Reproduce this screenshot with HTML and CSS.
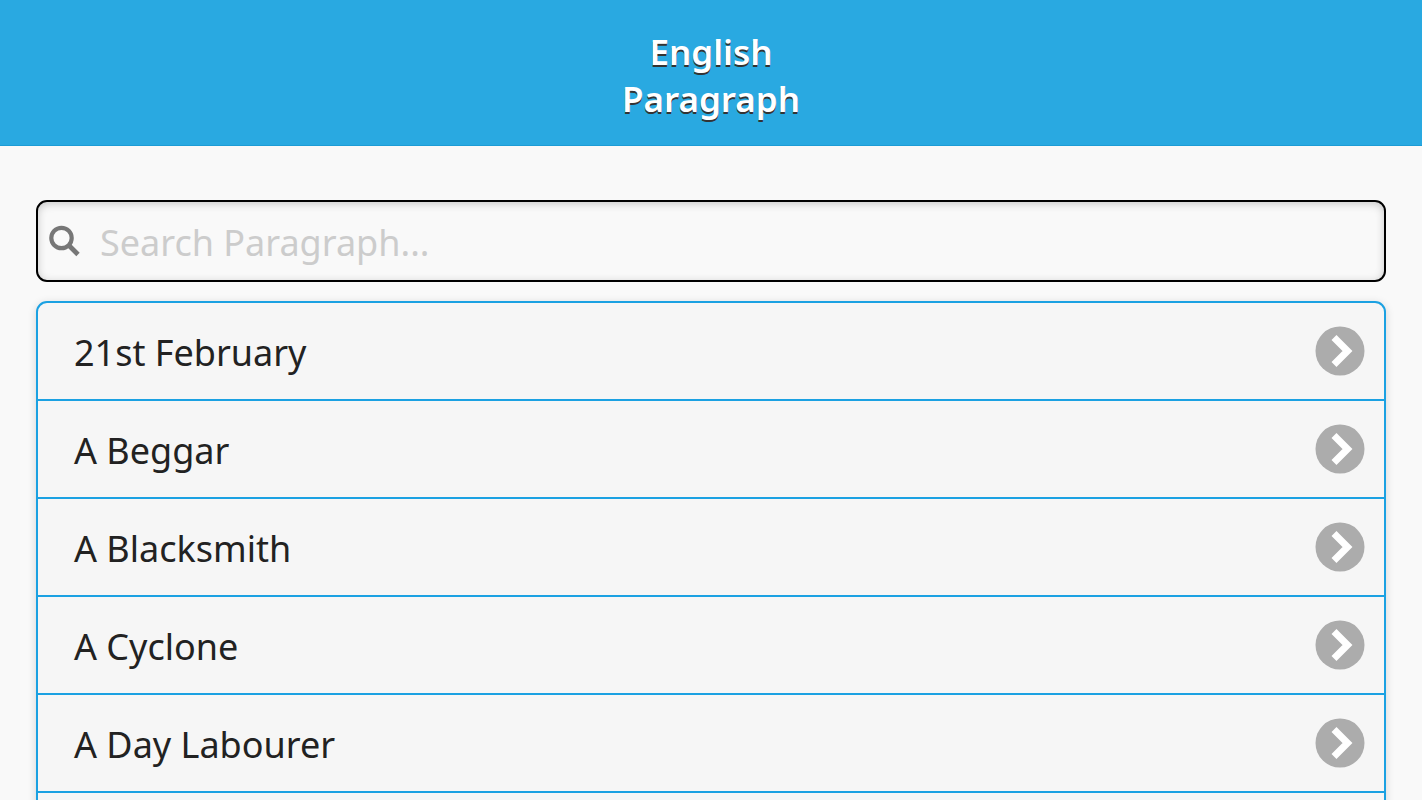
FILE: index.html
```html
<!DOCTYPE html>
<html lang="en">
<head>
<meta charset="utf-8">
<meta name="viewport" content="width=device-width, initial-scale=1">
<title>English Paragraph</title>
<link rel="stylesheet" href="styles.css">
</head>
<body>
<svg class="sprite" aria-hidden="true">
  <symbol id="chevron" viewBox="0 0 50 50">
    <circle cx="25" cy="25" r="24.5" fill="#acacac"/>
    <path d="M19 11.500 32.500 25 19 38.500" fill="none" stroke="#fff" stroke-width="7"/>
  </symbol>
</svg>
<header class="header">
  <h1 class="title">English<br>Paragraph</h1>
</header>
<main class="content">
  <label class="search">
    <svg class="search-icon" viewBox="0 0 32 32" aria-hidden="true">
      <circle cx="13.500" cy="13" r="10.200" fill="none" stroke="#777" stroke-width="4.200"/>
      <path d="M20.500 20 30 29.500" fill="none" stroke="#777" stroke-width="4.800"/>
    </svg>
    <input class="search-input" type="text" placeholder="Search Paragraph..." aria-label="Search Paragraph">
  </label>
  <ul class="list">
    <li class="item"><a class="link" href="#february"><span class="label">21st February</span><svg class="arrow" aria-hidden="true"><use href="#chevron"/></svg></a></li>
    <li class="item"><a class="link" href="#beggar"><span class="label">A Beggar</span><svg class="arrow" aria-hidden="true"><use href="#chevron"/></svg></a></li>
    <li class="item"><a class="link" href="#blacksmith"><span class="label">A Blacksmith</span><svg class="arrow" aria-hidden="true"><use href="#chevron"/></svg></a></li>
    <li class="item"><a class="link" href="#cyclone"><span class="label">A Cyclone</span><svg class="arrow" aria-hidden="true"><use href="#chevron"/></svg></a></li>
    <li class="item"><a class="link" href="#labourer"><span class="label">A Day Labourer</span><svg class="arrow" aria-hidden="true"><use href="#chevron"/></svg></a></li>
  </ul>
</main>
</body>
</html>
```
FILE: styles.css
```css
* {
  box-sizing: border-box;
}

body {
  margin: 0;
  height: 100vh;
  display: flex;
  flex-direction: column;
  overflow: hidden;
  background: #f9f9f9;
  color: #222;
  font-family: "Noto Sans", "Open Sans", sans-serif;
  font-size: 36px;
}

.sprite {
  display: none;
}

.header {
  flex: none;
  padding: 28px 36px 23px;
  border-bottom: 1px solid #1c9cd6;
  background: #29a9e1;
}

.title {
  margin: 0;
  color: #fff;
  font-size: 35px;
  font-weight: 600;
  line-height: 47px;
  text-align: center;
  text-shadow: 0 2px 0 #333;
}

.content {
  flex: 1;
  min-height: 0;
  display: flex;
  flex-direction: column;
  gap: 19px;
  padding: 54px 36px 0;
}

.search {
  flex: none;
  display: flex;
  align-items: center;
  gap: 20px;
  padding: 0 10px;
  border: 2px solid #000;
  border-radius: 11px;
  background: #f9f9f9;
  box-shadow: inset 0 2px 8px rgba(0, 0, 0, 0.2);
}

.search-icon {
  flex: none;
  width: 32px;
  height: 32px;
}

.search-input {
  flex: 1;
  min-width: 0;
  padding: 16px 0 12px;
  border: 0;
  outline: 0;
  background: transparent;
  color: #222;
  font: inherit;
  line-height: 50px;
}

.search-input::placeholder {
  color: #ccc;
  opacity: 1;
}

.list {
  flex: none;
  margin: 0;
  padding: 0 0 98px;
  border: 2px solid #1ba1e2;
  border-radius: 11px;
  background: #f6f6f6;
  box-shadow: 0 2px 8px rgba(0, 0, 0, 0.15);
  list-style: none;
}

.item {
  border-bottom: 2px solid #1ba1e2;
}

.link {
  display: flex;
  align-items: center;
  justify-content: space-between;
  padding: 22px 19px 22px 36px;
  color: #222;
  line-height: 48px;
  text-decoration: none;
}

.label {
  padding-top: 4px;
}

.arrow {
  flex: none;
  width: 50px;
  height: 50px;
}
```
